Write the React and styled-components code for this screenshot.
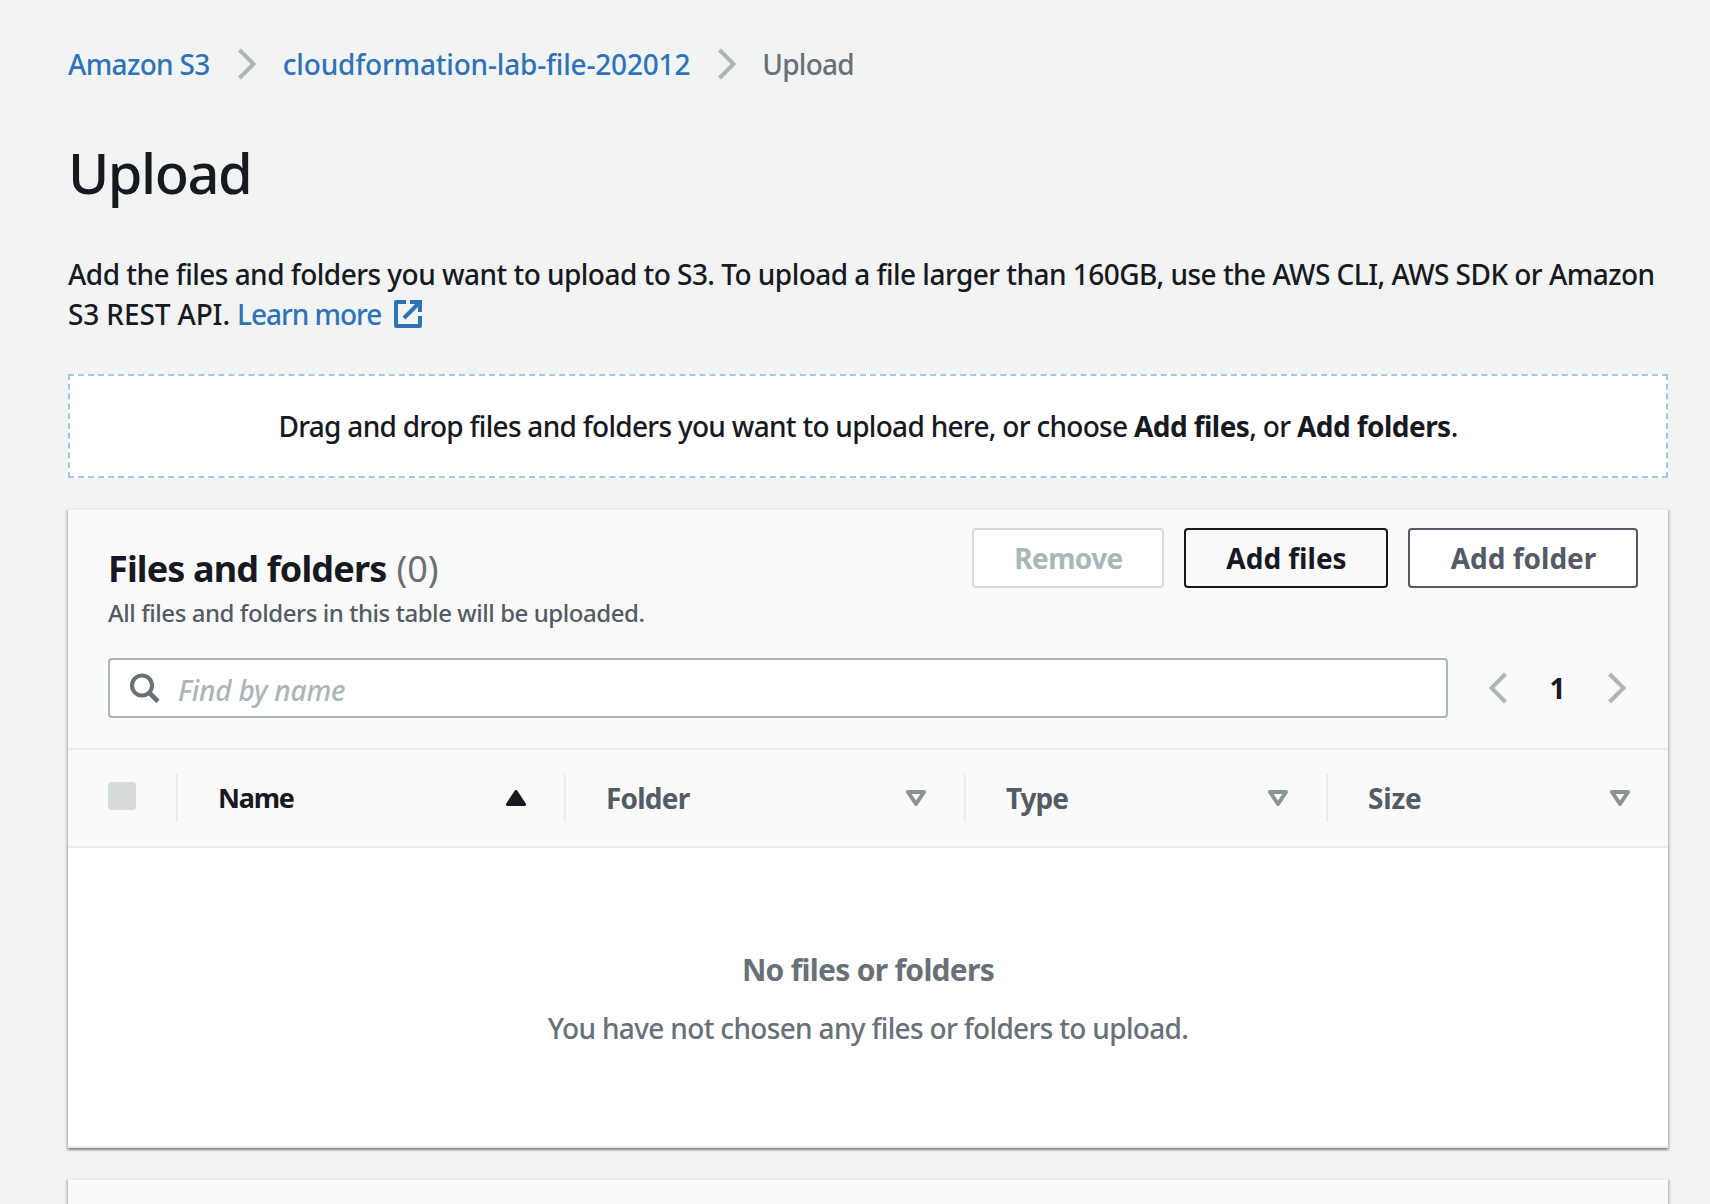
import React from 'react';
import styled, { createGlobalStyle } from 'styled-components';

const color = {
  page: '#f2f3f3',
  ink: '#16191f',
  secondary: '#545b64',
  muted: '#687078',
  disabled: '#aab7b8',
  disabledBorder: '#d5dbdb',
  divider: '#eaeded',
  surface: '#fafafa',
  link: '#2e73b8',
};

const GlobalStyle = createGlobalStyle`
  * {
    box-sizing: border-box;
  }

  body {
    margin: 0;
    height: 1204px;
    overflow: hidden;
    background: ${color.page};
    color: ${color.ink};
    font-family: "Noto Sans", "Open Sans", sans-serif;
    font-size: 28px;
    line-height: 40px;
    font-weight: 500;
  }

  #root {
    height: 100%;
  }
`;

const Page = styled.main`
  height: 1204px;
  padding: 44px 42px 0 68px;
  overflow: hidden;
`;

const Breadcrumbs = styled.nav`
  display: flex;
  align-items: center;
  height: 40px;
  white-space: nowrap;
`;

const Crumb = styled.a`
  color: ${(p) => (p.$current ? color.muted : color.link)};
  letter-spacing: ${(p) => p.$tracking || 0}px;
`;

const CrumbArrow = styled.svg`
  flex: none;
  width: 20px;
  height: 32px;
  margin: 0 ${(p) => p.$after}px 0 27px;
`;

const Title = styled.h1`
  margin: 54px 0 0;
  font-size: 56px;
  line-height: 68px;
  font-weight: 500;
  letter-spacing: -1.5px;
`;

const Intro = styled.p`
  margin: 48px 0 0;
  white-space: nowrap;
  letter-spacing: -0.53px;
`;

const IntroEnd = styled.span`
  letter-spacing: -0.12px;
`;

const LearnMore = styled.a`
  color: ${color.link};
  letter-spacing: -1.05px;
`;

const ExternalIcon = styled.svg`
  width: 28px;
  height: 28px;
  margin-left: 13px;
  vertical-align: -3px;
`;

const DropZone = styled.section`
  display: flex;
  align-items: center;
  justify-content: center;
  height: 104px;
  margin-top: 40px;
  border: 2px dashed #a1c8e2;
  background: #fff;
  letter-spacing: -0.71px;
`;

const DropText = styled.p`
  margin: 0;
  white-space: pre;
`;

const Strong = styled.b`
  font-weight: 700;
  letter-spacing: -0.55px;
`;

const Panel = styled.section`
  height: 640px;
  margin-top: 30px;
  border-top: 2px solid ${color.divider};
  border-bottom: 2px solid ${color.divider};
  background: #fff;
  box-shadow:
    0 2px 2px 0 rgba(0, 28, 36, 0.3),
    2px 2px 2px 0 rgba(0, 28, 36, 0.15),
    -2px 2px 2px 0 rgba(0, 28, 36, 0.15);
`;

const PanelHeader = styled.header`
  height: 238px;
  padding: 18px 30px 0 40px;
  background: ${color.surface};
`;

const HeaderTop = styled.div`
  display: flex;
  justify-content: space-between;
  height: 130px;
`;

const HeadingGroup = styled.div`
  padding-top: 19px;
`;

const PanelTitle = styled.h2`
  display: flex;
  margin: 0;
  font-size: 36px;
  line-height: 44px;
  font-weight: 700;
  letter-spacing: -0.85px;
`;

const Counter = styled.span`
  margin-left: 10px;
  color: ${color.muted};
  font-weight: 400;
  letter-spacing: 0;
`;

const PanelDescription = styled.p`
  margin: 4px 0 0;
  color: ${color.secondary};
  font-size: 24px;
  line-height: 36px;
  letter-spacing: -0.44px;
`;

const Actions = styled.div`
  display: flex;
  gap: 20px;
`;

const buttonTones = {
  disabled: { text: color.disabled, border: color.disabledBorder, fill: '#fff' },
  hover: { text: color.ink, border: color.ink, fill: color.surface },
  normal: { text: color.secondary, border: color.secondary, fill: '#fff' },
};

const Button = styled.button`
  width: ${(p) => p.$width}px;
  height: 60px;
  padding: 0 0 0 1px;
  border: 2px solid ${(p) => buttonTones[p.$tone].border};
  border-radius: 4px;
  background: ${(p) => buttonTones[p.$tone].fill};
  color: ${(p) => buttonTones[p.$tone].text};
  font: inherit;
  font-weight: 700;
  letter-spacing: ${(p) => p.$tracking || 0}px;
  white-space: nowrap;
`;

const FilterRow = styled.div`
  display: flex;
  align-items: center;
`;

const SearchBox = styled.div`
  display: flex;
  align-items: center;
  width: 1340px;
  height: 60px;
  padding-left: 20px;
  border: 2px solid ${color.disabled};
  border-radius: 4px;
  background: #fff;
`;

const SearchIcon = styled.svg`
  flex: none;
  width: 30px;
  height: 30px;
`;

const SearchInput = styled.input`
  flex: 1;
  height: 50px;
  margin: 3px 0 0 18px;
  padding: 0;
  border: 0;
  outline: 0;
  background: transparent;
  font: inherit;
  letter-spacing: -0.2px;

  &::placeholder {
    color: ${color.disabled};
    font-style: italic;
    opacity: 1;
  }
`;

const Pagination = styled.div`
  display: flex;
  align-items: center;
  margin-left: 40px;
`;

const PageArrow = styled.svg`
  width: 20px;
  height: 32px;
`;

const PageNumber = styled.span`
  width: 99px;
  text-align: center;
  font-weight: 700;
`;

const TableHead = styled.div`
  display: grid;
  grid-template-columns: 110px 388px 400px 362px 340px;
  align-items: center;
  height: 100px;
  border-top: 2px solid ${color.divider};
  border-bottom: 2px solid ${color.divider};
  background: ${color.surface};
`;

const HeadCell = styled.div`
  display: flex;
  align-items: center;
  justify-content: space-between;
  height: 48px;
  padding: 0 38px 0 40px;
  border-right: ${(p) => (p.$last ? 0 : 2)}px solid ${color.divider};
`;

const Checkbox = styled.span`
  width: 28px;
  height: 28px;
  margin-bottom: 4px;
  border-radius: 4px;
  background: ${color.disabledBorder};
`;

const HeadLabel = styled.span`
  color: ${(p) => (p.$active ? color.ink : color.secondary)};
  font-size: ${(p) => p.$size || 28}px;
  font-weight: 700;
  letter-spacing: ${(p) => p.$tracking}px;
`;

const SortIcon = styled.svg`
  width: 20px;
  height: 16px;
`;

const EmptyState = styled.div`
  padding-top: 102px;
  color: ${color.muted};
  text-align: center;
`;

const EmptyTitle = styled.p`
  margin: 0;
  font-size: 30px;
  font-weight: 700;
  letter-spacing: -0.72px;
`;

const EmptyText = styled.p`
  margin: 18px 0 0;
  letter-spacing: -0.67px;
`;

const Chevron = ({ as: Frame, left, ...rest }) => (
  <Frame viewBox="0 0 20 32" fill="none" stroke={color.disabled} strokeWidth="4" {...rest}>
    <path d={left ? 'M17.5 2 3.5 16l14 14' : 'M2.5 2l14 14-14 14'} />
  </Frame>
);

const columns = [
  { label: 'Name', active: true, tracking: -1.2, size: 27 },
  { label: 'Folder', tracking: -0.8 },
  { label: 'Type', tracking: -1 },
  { label: 'Size', tracking: -0.2 },
];

export default function App() {
  return (
    <>
      <GlobalStyle />
      <Page>
        <Breadcrumbs>
          <Crumb $tracking={-0.65}>Amazon S3</Crumb>
          <Chevron as={CrumbArrow} $after={26} />
          <Crumb $tracking={-0.18}>cloudformation-lab-file-202012</Crumb>
          <Chevron as={CrumbArrow} $after={25} />
          <Crumb $current $tracking={-0.75}>Upload</Crumb>
        </Breadcrumbs>

        <Title>Upload</Title>
        <Intro>
          Add the files and folders you want to upload to S3. To upload a file larger than 160GB, use the AWS CLI, AWS SDK or Amazon
          <br />
          <IntroEnd>S3 REST API. </IntroEnd>
          <LearnMore>Learn more</LearnMore>
          <ExternalIcon viewBox="0 0 28 28" fill="none" stroke={color.link} strokeWidth="4">
            <path d="M12 2H2v24h24V16" strokeLinejoin="round" />
            <path d="M16 2h10v10M26 2 10 18" />
          </ExternalIcon>
        </Intro>

        <DropZone>
          <DropText>
            Drag and drop files and folders you want to upload here, or choose <Strong>Add files</Strong>, or <Strong>Add folders</Strong>.
          </DropText>
        </DropZone>

        <Panel>
          <PanelHeader>
            <HeaderTop>
              <HeadingGroup>
                <PanelTitle>
                  Files and folders<Counter>(0)</Counter>
                </PanelTitle>
                <PanelDescription>All files and folders in this table will be uploaded.</PanelDescription>
              </HeadingGroup>
              <Actions>
                <Button $tone="disabled" $width={192} $tracking={-0.6}>Remove</Button>
                <Button $tone="hover" $width={204}>Add files</Button>
                <Button $tone="normal" $width={230}>Add folder</Button>
              </Actions>
            </HeaderTop>
            <FilterRow>
              <SearchBox>
                <SearchIcon viewBox="0 0 30 30" fill="none" stroke={color.muted} strokeWidth="4">
                  <circle cx="12" cy="12.5" r="10" />
                  <path d="m19 19.5 9 9" strokeWidth="4.6" />
                </SearchIcon>
                <SearchInput placeholder="Find by name" />
              </SearchBox>
              <Pagination>
                <Chevron as={PageArrow} left />
                <PageNumber>1</PageNumber>
                <Chevron as={PageArrow} />
              </Pagination>
            </FilterRow>
          </PanelHeader>

          <TableHead>
            <HeadCell>
              <Checkbox />
            </HeadCell>
            {columns.map((c, i) => (
              <HeadCell key={c.label} $last={i === columns.length - 1}>
                <HeadLabel $active={c.active} $size={c.size} $tracking={c.tracking}>{c.label}</HeadLabel>
                <SortIcon viewBox="0 0 20 16" strokeLinejoin="round">
                  {c.active ? (
                    <path d="M10 1.6 18.4 14.4H1.6z" fill={color.ink} stroke={color.ink} strokeWidth="3.2" />
                  ) : (
                    <path d="M2 2h16l-8 12z" fill="none" stroke="#879596" strokeWidth="4" />
                  )}
                </SortIcon>
              </HeadCell>
            ))}
          </TableHead>

          <EmptyState>
            <EmptyTitle>No files or folders</EmptyTitle>
            <EmptyText>You have not chosen any files or folders to upload.</EmptyText>
          </EmptyState>
        </Panel>

        <Panel>
          <PanelHeader />
        </Panel>
      </Page>
    </>
  );
}
